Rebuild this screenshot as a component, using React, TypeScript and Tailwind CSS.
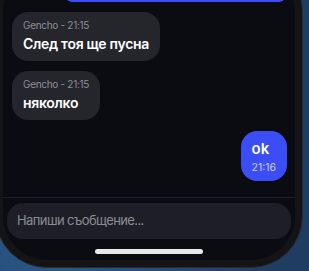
export default function App() {
  const font = { fontFamily: "Inter, 'Noto Sans', sans-serif" };
  return (
    <div
      className="relative w-[309px] h-[271px] overflow-hidden bg-[#1f3d63]"
      style={font}
    >
      <div className="absolute inset-0 bg-[radial-gradient(circle_at_20%_90%,#2b5a8a,transparent_60%)]" />
      <div className="relative ml-[-5px] mt-[-40px] w-[308px] h-[308px] rounded-[52px] bg-[#141417] border border-[#2a2b30] p-[7px]">
        <div className="flex flex-col h-full rounded-[44px] bg-[#0b0c11] overflow-hidden">
          <div className="h-[229px] shrink-0 flex flex-col pl-[9px] pr-[8px] overflow-hidden">
            <div className="ml-[54px] mr-[2px] h-[34px] shrink-0 rounded-b-[6px] bg-[#3b4ef6]" />
            <div className="mt-[10px] self-start rounded-[16px] bg-[#25252c] px-[11px] pt-[6px] pb-[7px]">
              <div className="text-[10px] leading-[14px] tracking-[-0.3px] text-[#8d8d96]">Gencho - 21:15</div>
              <div className="mt-[2px] text-[14px] leading-[20px] tracking-[-0.3px] font-semibold text-white">След тоя ще пусна</div>
            </div>
            <div className="mt-[10px] self-start rounded-[16px] bg-[#25252c] px-[11px] pt-[6px] pb-[7px]">
              <div className="text-[10px] leading-[14px] tracking-[-0.3px] text-[#8d8d96]">Gencho - 21:15</div>
              <div className="mt-[2px] text-[14px] leading-[20px] tracking-[-0.3px] font-semibold text-white">няколко</div>
            </div>
            <div className="mt-[11px] self-end rounded-[16px] bg-[#3b4ef6] px-[11px] pt-[8px] pb-[6px]">
              <div className="text-[15px] leading-[20px] font-semibold text-white">ok</div>
              <div className="mt-[2px] text-[10.5px] leading-[14px] text-[#c9cffd]">21:16</div>
            </div>
          </div>
          <div className="shrink-0 border-t border-[#1d1f26] px-[4px] pt-[5px]">
            <div className="flex items-center h-[36px] rounded-[16px] bg-[#1e1f26] px-[10px] text-[13px] tracking-[-0.6px] text-[#8a8b93]">
              Напиши съобщение...
            </div>
            <div className="mx-auto mt-[10px] h-[5px] w-[108px] rounded-full bg-[#e8e8ea]" />
          </div>
        </div>
      </div>
    </div>
  );
}
